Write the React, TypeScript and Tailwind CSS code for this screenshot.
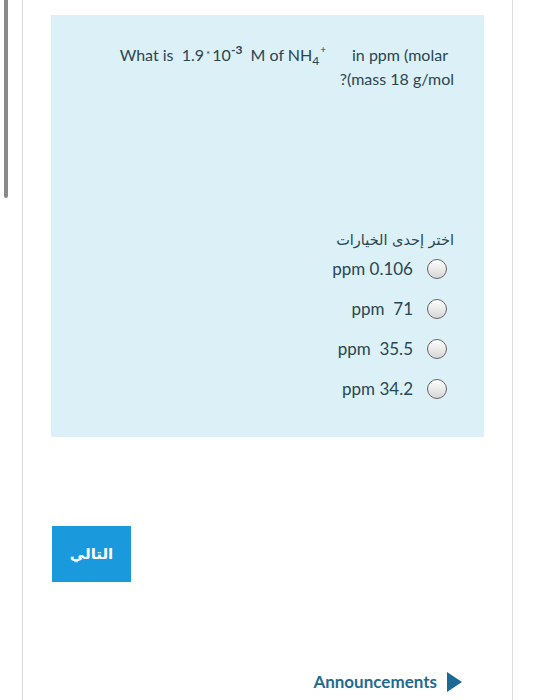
import React from "react";

const options = ["ppm 0.106", "ppm\u00a0 71", "ppm\u00a0 35.5", "ppm 34.2"];

const Radio = () => (
  <span className="w-[20px] h-[20px] rounded-full border-[1.5px] border-[#666] bg-gradient-to-b from-white to-[#d6d6d6] shrink-0" />
);

const App = () => {
  return (
    <div
      className="relative w-[535px] h-[700px] bg-white overflow-hidden"
      style={{ fontFamily: "Lato, 'Open Sans', sans-serif" }}
    >
      {/* scrollbar thumb */}
      <div className="absolute left-[4px] top-0 w-[4px] h-[198px] bg-[#8a8a8a] rounded-b-sm" />

      <div className="ml-[22px] w-[491px] h-full border-x border-[#dcdcdc] pt-[15px]">
        <div className="mx-[28px] h-[422px] bg-[#dcf0f7] flex flex-col">
          <div className="pt-[29px] pr-[30px] flex flex-col items-end text-[16px] leading-[21px] text-[#2a4651]">
            <div className="pr-[6px] whitespace-nowrap">
              What is&nbsp; 1.9
              <span className="relative -top-[3px] text-[10px] mx-[2px]">*</span>
              10
              <span className="relative -top-[7px] text-[12px] font-bold">-3</span>
              &nbsp;&nbsp;M of NH
              <span className="relative top-[4px] text-[12px]">4</span>
              <span className="relative -top-[8px] text-[10px] ml-[1px]">+</span>
              <span className="inline-block w-[26px]" />
              in ppm (molar
            </div>
            <div className="whitespace-nowrap">?(mass 18 g/mol</div>
          </div>

          <div
            dir="rtl"
            className="mt-[142px] pr-[30px] text-[14.5px] leading-[18px] text-[#2a4651]"
            style={{ fontFamily: "'DejaVu Sans', sans-serif" }}
          >
            اختر إحدى الخيارات
          </div>

          <div className="flex flex-col">
            {options.map((opt) => (
              <div
                key={opt}
                className="h-[40px] flex items-center justify-end gap-[14px] pr-[37px]"
              >
                <span className="text-[17px] text-[#2a4651] whitespace-nowrap">{opt}</span>
                <Radio />
              </div>
            ))}
          </div>
        </div>

        <div className="mt-[89px] ml-[29px]">
          <button
            className="w-[79px] h-[56px] bg-[#1a99dd] text-white text-[15px] font-bold"
            style={{ fontFamily: "'DejaVu Sans', sans-serif" }}
          >
            التالي
          </button>
        </div>

        <div className="mt-[87px] flex items-center justify-end pr-[50px] gap-[10px]">
          <span className="text-[17px] font-bold text-[#1f6b8f]">Announcements</span>
          <svg width="15" height="20" viewBox="0 0 15 20">
            <polygon points="0,0 15,10 0,20" fill="#1b6a95" />
          </svg>
        </div>
      </div>
    </div>
  );
};

export default App;
